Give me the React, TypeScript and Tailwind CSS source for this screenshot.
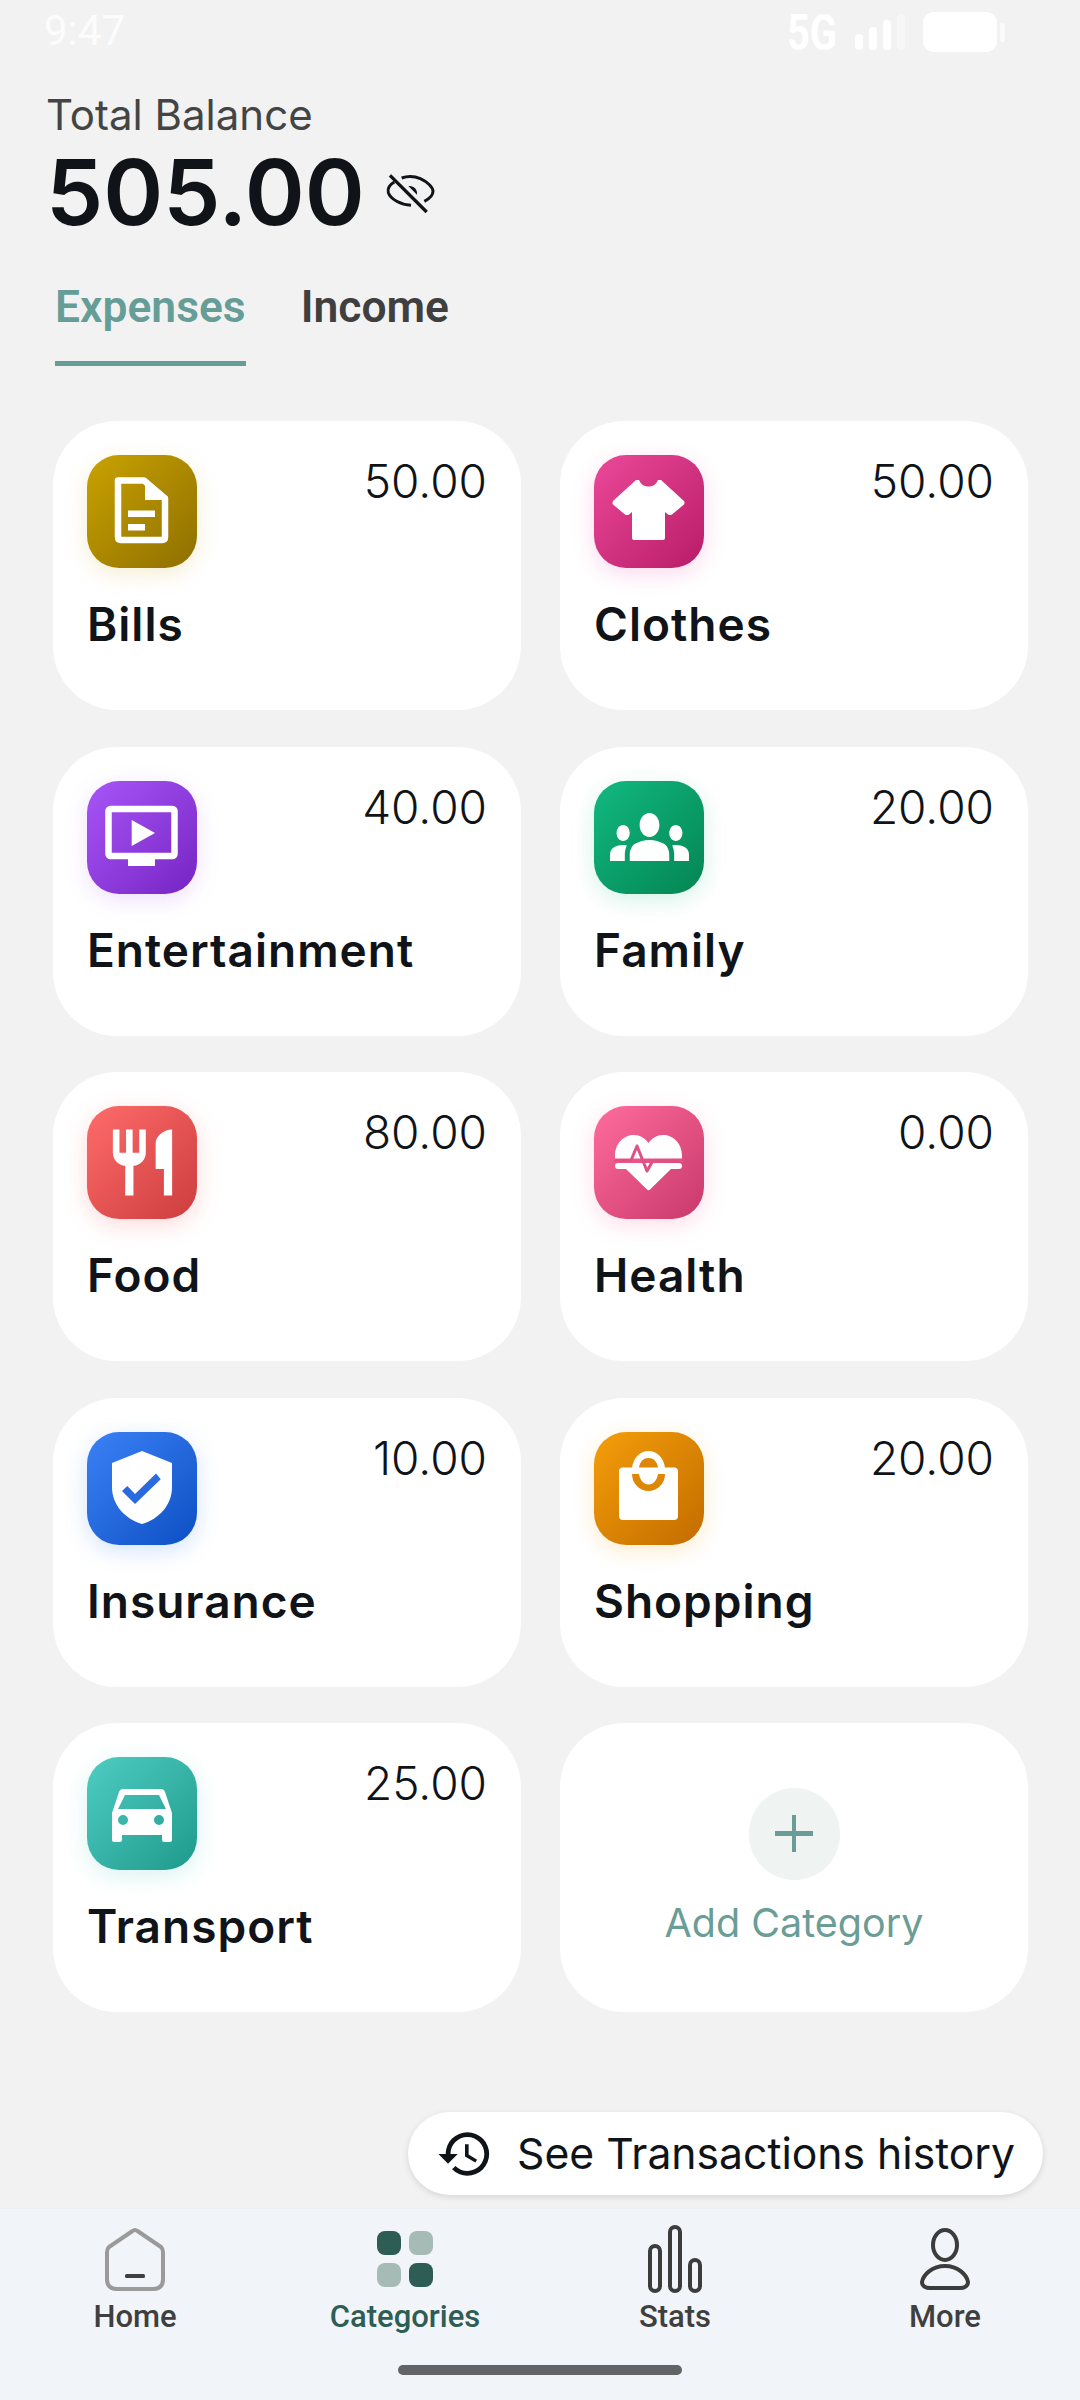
import React from 'react';
import { MdHistory, MdRestaurant } from 'react-icons/md';

const BillsIcon = () => (
  <svg viewBox="0 0 110 113" className="w-full h-full">
    <path d="M31 25.5H57L78 43.5V82Q78 85 75 85H34Q31 85 31 82Z" fill="none" stroke="#fff" strokeWidth="6.5" strokeLinejoin="round" />
    <path d="M58 23L81 42V45H58Z" fill="#fff" />
    <rect x="41" y="55.5" width="27" height="6.5" fill="#fff" />
    <rect x="41" y="69" width="17" height="6.5" fill="#fff" />
  </svg>
);

const ShirtIcon = () => (
  <svg viewBox="0 0 110 113" className="w-full h-full">
    <path
      d="M42 25H45C47 29.500 50 31.500 54.500 31.500C59 31.500 62 29.500 64 25H67L90 46Q91 48 90 49.500L78 59.500Q76 60.500 74 59.500L71 57V83Q71 85 69 85H40Q38 85 38 83V57L35 59.500Q33 60.500 31 59.500L19 49.500Q18 48 19 46Z"
      fill="#fff"
    />
  </svg>
);

const TvIcon = () => (
  <svg viewBox="0 0 110 113" className="w-full h-full">
    <rect x="21.500" y="28" width="66" height="47" rx="2" fill="none" stroke="#fff" strokeWidth="6.500" />
    <rect x="41" y="78" width="27" height="7" fill="#fff" />
    <path d="M44.700 39L68 52L44.700 65Z" fill="#fff" />
  </svg>
);

const FamilyIcon = () => (
  <svg viewBox="0 6 24 12" preserveAspectRatio="none" className="w-[79px] h-[48px]">
    <path
      fill="#fff"
      d="M4 13c1.100 0 2-.9 2-2s-.9-2-2-2-2 .9-2 2 .9 2 2 2zm1.130 1.100C4.760 14.040 4.390 14 4 14c-.99 0-1.930.21-2.780.58C.48 14.900 0 15.620 0 16.430V18h4.500v-1.610c0-.83.23-1.610.63-2.290zM20 13c1.100 0 2-.9 2-2s-.9-2-2-2-2 .9-2 2 .9 2 2 2zm4 3.430c0-.81-.48-1.530-1.220-1.850-.85-.37-1.790-.58-2.780-.58-.39 0-.76.04-1.130.1.4.68.63 1.460.63 2.290V18H24v-1.570zM16.240 13.650c-1.170-.52-2.610-.9-4.240-.9-1.630 0-3.070.39-4.240.9C6.680 14.130 6 15.210 6 16.390V18h12v-1.610c0-1.180-.68-2.260-1.760-2.740zM12 12c1.660 0 3-1.340 3-3s-1.340-3-3-3-3 1.340-3 3 1.340 3 3 3z"
    />
  </svg>
);

const HeartIcon = () => (
  <svg viewBox="0 0 110 113" className="w-full h-full">
    <path d="M21 50C21 37 30 29 40 29C46 29 51 32 54.500 37C58 32 63 29 69 29C79 29 88 37 88 50V52.500H21Z" fill="#fff" />
    <rect x="21" y="57" width="67" height="6" rx="3" fill="#fff" />
    <path d="M31 62H78L56 83.500Q54.500 85 53 83.500Z" fill="#fff" />
    <path d="M20 54.500H37L43 40L53 65L59 54.500H90" fill="none" stroke="#e04f85" strokeWidth="3" strokeLinejoin="round" />
  </svg>
);

const ShieldIcon = () => (
  <svg viewBox="0 0 110 113" className="w-full h-full">
    <path d="M55 19L85 31V55C85 73 72 87 55 92C38 87 25 73 25 55V31Z" fill="#fff" />
    <path d="M35 59L40.300 54L48 62L69 41.600L73.700 47.300L48 72Z" fill="#2a6adf" />
  </svg>
);

const BagIcon = () => (
  <svg viewBox="0 0 110 113" className="w-full h-full">
    <rect x="25" y="35.500" width="59" height="52.500" rx="4" fill="#fff" />
    <path d="M38 36C39 26 46 19 54.500 19C63 19 70 26 71 36Z" fill="#fff" />
    <path d="M45 35.500C46 29 50 26 54.500 26C59 26 63 29 64 35.500Z" fill="#de8606" />
    <path d="M38 42H71C71 52 63 59 54.500 59C46 59 38 52 38 42Z" fill="#de8606" />
    <path d="M45 42H64C63 48 59.500 52.500 54.500 52.500C49.500 52.500 46 48 45 42Z" fill="#fff" />
  </svg>
);

const CarIcon = () => (
  <svg viewBox="0 0 110 113" className="w-full h-full">
    <path
      fillRule="evenodd"
      fill="#fff"
      d="M36 32H74Q77 32 78 35L85 56V83Q85 85 83 85H77Q75 85 75 83V78H35V83Q35 85 33 85H27Q25 85 25 83V56L32 35Q33 32 36 32ZM38 38L31 52H79L72 38ZM36 58A5 5 0 1 0 36 68A5 5 0 1 0 36 58ZM72 58A5 5 0 1 0 72 68A5 5 0 1 0 72 58Z"
    />
  </svg>
);

const categories = [
  { name: 'Bills', amount: '50.00', icon: <BillsIcon />, box: 'from-[#c9a300] to-[#8f6f00] shadow-[0_6px_22px_rgba(201,163,0,0.18)]' },
  { name: 'Clothes', amount: '50.00', icon: <ShirtIcon />, box: 'from-[#ec4899] to-[#b81a68] shadow-[0_6px_22px_rgba(236,72,153,0.2)]' },
  { name: 'Entertainment', amount: '40.00', icon: <TvIcon />, box: 'from-[#a855f7] to-[#7722c4] shadow-[0_6px_22px_rgba(168,85,247,0.18)]' },
  { name: 'Family', amount: '20.00', icon: <FamilyIcon />, box: 'from-[#12b981] to-[#048553] shadow-[0_6px_22px_rgba(16,185,129,0.18)]' },
  { name: 'Food', amount: '80.00', icon: <MdRestaurant size={79} color="#fff" />, box: 'from-[#ff6b6b] to-[#cc3d3d] shadow-[0_6px_22px_rgba(255,107,107,0.25)]' },
  { name: 'Health', amount: '0.00', icon: <HeartIcon />, box: 'from-[#ff6b9d] to-[#c9386b] shadow-[0_6px_22px_rgba(255,107,157,0.22)]' },
  { name: 'Insurance', amount: '10.00', icon: <ShieldIcon />, box: 'from-[#3b82f6] to-[#0b4fc4] shadow-[0_6px_22px_rgba(59,130,246,0.22)]' },
  { name: 'Shopping', amount: '20.00', icon: <BagIcon />, box: 'from-[#f59e0b] to-[#c26c00] shadow-[0_6px_22px_rgba(245,158,11,0.2)]' },
  { name: 'Transport', amount: '25.00', icon: <CarIcon />, box: 'from-[#4ecdc4] to-[#1d9a8b] shadow-[0_6px_22px_rgba(78,205,196,0.22)]' },
];

const navLabel = 'mt-[6px] text-[31px] leading-[36px] font-medium font-["Roboto",sans-serif]';

const App: React.FC = () => {
  return (
    <div className="w-[1080px] h-[2400px] bg-[#f2f2f2] flex flex-col overflow-hidden font-['Inter',sans-serif]">
      {/* status bar */}
      <div className="h-[62px] flex items-center justify-between pl-[44px] pr-[60px] text-white font-['Roboto',sans-serif]">
        <span className="text-[42px] leading-[44px] opacity-80">9:47</span>
        <svg viewBox="0 0 250 60" className="w-[250px] h-[60px]">
          <text x="17" y="49" fill="#fff" fontSize="50" fontWeight="700" fontFamily="Roboto, sans-serif" textLength="50" lengthAdjust="spacingAndGlyphs">5G</text>
          <rect x="85" y="33" width="8" height="16" rx="4" fill="#fff" />
          <rect x="99" y="26" width="8" height="23" rx="4" fill="#fff" />
          <rect x="113" y="19" width="8" height="30" rx="4" fill="#fff" />
          <rect x="127" y="13" width="8" height="36" rx="4" fill="#fff" fillOpacity="0.4" />
          <rect x="153" y="11" width="74" height="40" rx="11" fill="#fff" />
          <rect x="230" y="22" width="5" height="19" rx="2" fill="#fff" fillOpacity="0.7" />
        </svg>
      </div>

      {/* balance */}
      <div className="pl-[46px] pt-[31px]">
        <div className="text-[42px] leading-[44px] text-[#444]">Total Balance</div>
        <div className="flex items-center mt-[10px]">
          <span className="text-[91px] leading-[90px] font-semibold text-[#101418]">505.00</span>
          <svg viewBox="0 0 240 180" className="w-[80px] h-[60px] ml-[6px]">
            <path d="M70 60C52 70 50 84 52 92C58 112 90 128 120 130M92 48C108 42 130 42 148 50C170 60 186 76 186 88C186 100 176 110 160 118" fill="none" stroke="#101418" strokeWidth="9" />
            <path d="M112 72C128 70 140 82 138 98Z" fill="#101418" />
            <path d="M57 40L167 150" stroke="#101418" strokeWidth="10" />
          </svg>
        </div>
      </div>

      {/* tabs */}
      <div className="mt-[45px] w-[505px] border-b border-[#eff3f2] flex pl-[55px] gap-[55px] font-['Roboto',sans-serif] text-[44.400px] leading-[50px] font-semibold">
        <div className="pb-[29px] border-b-[5px] border-[#669e97] text-[#669e97] -mb-px">Expenses</div>
        <div className="text-[#3f3f3f]">Income</div>
      </div>

      {/* categories */}
      <div className="mt-[55px] px-[53px] grid grid-cols-[468px_468px] auto-rows-[289px] gap-x-[39px] gap-y-[36.500px]">
        {categories.map(c => (
          <div key={c.name} className="bg-white rounded-[64px] px-[34px] pt-[34px]">
            <div className="flex items-start justify-between">
              <div className={`w-[110px] h-[113px] rounded-[32px] bg-linear-to-br flex items-center justify-center ${c.box}`}>{c.icon}</div>
              <span className="text-[46px] leading-[52px] font-light text-[#101418]">{c.amount}</span>
            </div>
            <div className="mt-[28px] text-[46px] leading-[56px] font-semibold tracking-[1px] text-[#101418]">{c.name}</div>
          </div>
        ))}
        <div className="bg-white rounded-[64px] border-[3px] border-dashed border-white flex flex-col items-center pt-[62px]">
          <div className="w-[91px] h-[92px] rounded-full bg-[#eff3f2] flex items-center justify-center">
            <svg viewBox="0 0 38 38" className="w-[38px] h-[38px]">
              <rect x="17" y="0" width="4" height="37" fill="#6a9d96" />
              <rect x="0" y="16" width="38" height="5" fill="#6a9d96" />
            </svg>
          </div>
          <div className="mt-[19px] text-[39.500px] leading-[48px] text-[#6a9d96]">Add Category</div>
        </div>
      </div>

      {/* history button */}
      <div className="mt-auto flex justify-end pr-[37px] pb-[13px]">
        <div className="w-[635px] h-[83px] rounded-full bg-white shadow-[0_2px_6px_rgba(0,0,0,0.12)] flex items-center pl-[28px]">
          <MdHistory size={58} color="#101418" />
          <span className="ml-[23px] text-[42.700px] leading-[50px] text-[#101418]">See Transactions history</span>
        </div>
      </div>

      {/* bottom nav */}
      <div className="h-[192px] bg-[#f1f4f9] border-t border-[#ebedf0] flex flex-col">
        <div className="grid grid-cols-4 pt-[16px] h-[155px]">
          <div className="flex flex-col items-center text-[#3f3f3f]">
            <svg viewBox="0 0 60 68" className="w-[60px] h-[68px]">
              <path d="M27.500 6Q30 4 32.500 6L56 22Q58 24 58 27V54Q58 64 48 64H12Q2 64 2 54V27Q2 24 4 22Z" fill="none" stroke="#9a9a9a" strokeWidth="4" strokeLinejoin="round" />
              <rect x="20" y="49" width="20" height="4" rx="1.500" fill="#3f3f3f" />
            </svg>
            <span className={navLabel}>Home</span>
          </div>
          <div className="flex flex-col items-center text-[#2d5d54]">
            <svg viewBox="0 0 56 68" className="w-[56px] h-[68px]">
              <rect x="0" y="6" width="24" height="24" rx="8" fill="#2d5d54" />
              <rect x="32" y="6" width="24" height="24" rx="8" fill="#a6bab6" />
              <rect x="0" y="38" width="24" height="24" rx="8" fill="#a6bab6" />
              <rect x="32" y="38" width="24" height="24" rx="8" fill="#2d5d54" />
            </svg>
            <span className={navLabel}>Categories</span>
          </div>
          <div className="flex flex-col items-center text-[#3f3f3f]">
            <svg viewBox="0 0 54 68" fill="none" stroke="#3c3c3c" strokeWidth="4" className="w-[54px] h-[68px]">
              <rect x="2" y="21" width="10" height="45" rx="5" />
              <rect x="22" y="2" width="10" height="64" rx="5" />
              <rect x="42" y="35" width="10" height="31" rx="5" />
            </svg>
            <span className={navLabel}>Stats</span>
          </div>
          <div className="flex flex-col items-center text-[#3f3f3f]">
            <svg viewBox="0 0 50 68" fill="none" stroke="#3c3c3c" strokeWidth="4" className="w-[50px] h-[68px]">
              <ellipse cx="25" cy="20" rx="12" ry="15" />
              <path d="M25 41C12 41 3 50 2 57C2 61 6 63 10 63H40C44 63 48 61 48 57C47 50 38 41 25 41Z" />
            </svg>
            <span className={navLabel}>More</span>
          </div>
        </div>
        <div className="w-[284px] h-[10px] rounded-full bg-[#636466] mx-auto mt-[1px]" />
      </div>
    </div>
  );
};

export default App;
